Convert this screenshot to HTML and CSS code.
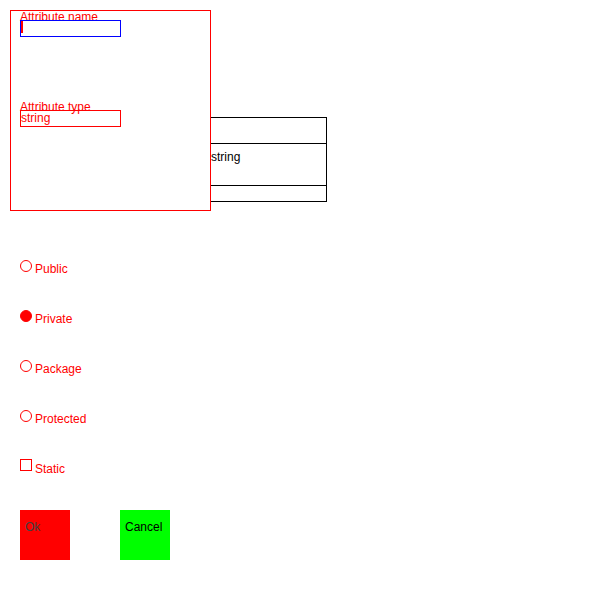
FILE: index.html
```html
<!DOCTYPE html>
<html>
<head>
<meta charset="utf-8">
<link rel="stylesheet" href="styles.css">
</head>
<body>
<div class="class-box">
  <div class="compartment name-part"></div>
  <div class="compartment attr-part"><span class="attr-type">string</span></div>
  <div class="compartment ops-part"></div>
</div>

<div class="dialog">
  <div class="field">
    <div class="label">Attribute name</div>
    <div class="input input-active"><span class="caret"></span></div>
  </div>
  <div class="field">
    <div class="label">Attribute type</div>
    <div class="input">string</div>
  </div>
</div>

<div class="options">
  <div class="option"><span class="radio"></span><span class="option-label">Public</span></div>
  <div class="option"><span class="radio radio-on"></span><span class="option-label">Private</span></div>
  <div class="option"><span class="radio"></span><span class="option-label">Package</span></div>
  <div class="option"><span class="radio"></span><span class="option-label">Protected</span></div>
  <div class="option"><span class="check"></span><span class="option-label">Static</span></div>
</div>

<div class="buttons">
  <button class="btn btn-ok">Ok</button>
  <button class="btn btn-cancel">Cancel</button>
</div>
</body>
</html>
```

FILE: styles.css
```css
html, body {
  margin: 0;
  padding: 0;
  background: #ffffff;
}

body {
  position: relative;
  width: 600px;
  height: 600px;
  font-family: "Liberation Sans", Arial, sans-serif;
  font-size: 12px;
  color: #ff0000;
  overflow: hidden;
}

/* diagram node behind the dialog */
.class-box {
  position: absolute;
  left: 200px;
  top: 117px;
  width: 127px;
  box-sizing: border-box;
  border: 1px solid #000000;
  color: #000000;
}

.compartment {
  box-sizing: border-box;
}

.name-part {
  height: 26px;
  border-bottom: 1px solid #000000;
}

.attr-part {
  height: 42px;
  border-bottom: 1px solid #000000;
  padding: 6px 0 0 10px;
  line-height: normal;
}

.ops-part {
  height: 15px;
}

/* dialog overlay */
.dialog {
  position: relative;
  z-index: 1;
  margin: 10px 0 0 10px;
  width: 201px;
  height: 201px;
  box-sizing: border-box;
  border: 1px solid #ff0000;
  background: #ffffff;
  padding: 0 9px;
}

.field {
  height: 90px;
}

.label {
  height: 9px;
  line-height: 12px;
  white-space: nowrap;
}

.input {
  position: relative;
  width: 101px;
  height: 17px;
  box-sizing: border-box;
  border: 1px solid #ff0000;
  line-height: 15px;
  padding: 0;
}

.input-active {
  border-color: #0000ff;
}

.caret {
  display: block;
  width: 2px;
  height: 12px;
  background: #ff0000;
}

/* visibility options */
.options {
  margin: 48px 0 0 20px;
  display: flex;
  flex-direction: column;
}

.option {
  height: 50px;
  display: flex;
  align-items: flex-start;
}

.radio {
  width: 12px;
  height: 12px;
  margin-top: 1px;
  box-sizing: border-box;
  border: 1px solid #ff0000;
  border-radius: 50%;
}

.radio-on {
  background: #ff0000;
}

.check {
  width: 12px;
  height: 12px;
  box-sizing: border-box;
  border: 1px solid #ff0000;
}

.option-label {
  margin-left: 3px;
  padding-top: 3px;
  line-height: normal;
}

/* buttons */
.buttons {
  margin: 1px 0 0 20px;
  display: flex;
  gap: 50px;
}

.btn {
  width: 50px;
  height: 50px;
  border: none;
  margin: 0;
  padding: 10px 0 0 5px;
  box-sizing: border-box;
  display: flex;
  align-items: flex-start;
  justify-content: flex-start;
  font-family: "Liberation Sans", Arial, sans-serif;
  font-size: 12px;
  line-height: normal;
  text-align: left;
}

.btn-ok {
  background: #ff0000;
  color: #404040;
}

.btn-cancel {
  background: #00ff00;
  color: #000000;
}
```
